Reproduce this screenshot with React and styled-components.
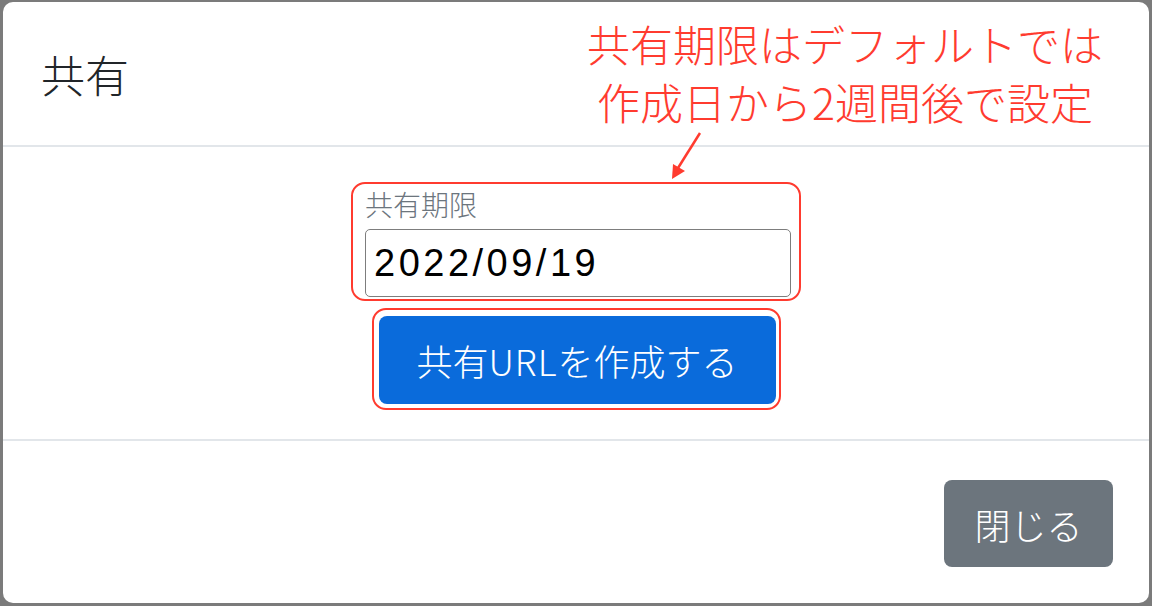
import React from 'react';
import styled, { createGlobalStyle } from 'styled-components';

const GlobalStyle = createGlobalStyle`
    * { box-sizing: border-box; }
    body {
        margin: 0;
        background: #7b7b7b;
        font-family: "Liberation Sans", "Noto Sans CJK JP", sans-serif;
        font-weight: 300;
    }
`

const Modal = styled.div`
    position: relative;
    display: flex;
    flex-direction: column;
    margin: 2px 3px 0 3px;
    height: 601px;
    background: #fff;
    border-radius: 10px;
    overflow: hidden;
`

const Header = styled.div`
    display: flex;
    align-items: center;
    height: 145px;
    padding-left: 38px;
    border-bottom: 2px solid #e2e6ea;
`

const Title = styled.h5`
    margin: 0;
    font-size: 44px;
    font-weight: 300;
    color: #212529;
`

const Note = styled.div`
    position: absolute;
    top: 18px;
    left: 562px;
    width: 560px;
    text-align: center;
    font-size: 43px;
    line-height: 54px;
    color: #ff3b2f;
`

// latin runs inside light CJK text, drawn with the CJK family so the weight matches
const Latin = styled.span`
    font-family: "Noto Sans CJK JP", sans-serif;
    font-weight: 300;
    letter-spacing: ${props => props.ls || 0}px;
`

const Arrow = styled.svg`
    position: absolute;
    top: 126px;
    left: 655px;
`

const Body = styled.div`
    display: flex;
    flex-direction: column;
    align-items: center;
    gap: 7px;
    padding: 35px 0 29px;
`

const Highlight = styled.div`
    border: 2px solid #ff3b2f;
    border-radius: 14px;
    width: ${props => props.w}px;
    padding: ${props => props.pad};
`

const Label = styled.label`
    display: block;
    font-size: 28px;
    line-height: 34px;
    margin-bottom: 5px;
    color: #6c757d;
`

const DateInput = styled.input`
    display: block;
    width: 100%;
    height: 68px;
    padding: 0 8px;
    border: 1px solid #7d7d7d;
    border-radius: 5px;
    font-family: "Liberation Sans", sans-serif;
    font-size: 38px;
    font-weight: 400;
    letter-spacing: 3.5px;
    color: #000;
    outline: none;
`

const Button = styled.button`
    display: flex;
    align-items: center;
    justify-content: center;
    width: ${props => props.w}px;
    height: ${props => props.h}px;
    border: none;
    border-radius: 8px;
    background: ${props => props.bg};
    color: #fff;
    font-family: "Liberation Sans", "Noto Sans CJK JP", sans-serif;
    font-size: 36px;
    font-weight: 300;
    cursor: pointer;
`

const Footer = styled.div`
    flex: 1;
    display: flex;
    justify-content: flex-end;
    align-items: flex-start;
    padding: 39px 36px 0 0;
    border-top: 2px solid #e2e6ea;
`

export default function App() {
    return (
        <>
            <GlobalStyle />
            <Modal>
                <Header>
                    <Title>共有</Title>
                </Header>
                <Note>
                    共有期限はデフォルトでは<br />
                    作成日から<Latin>2</Latin>週間後で設定
                </Note>
                <Arrow width="50" height="56" viewBox="0 0 50 56">
                    <line x1="42" y1="5" x2="20" y2="40" stroke="#ff3b2f" strokeWidth="2.5" />
                    <polygon points="14,51 15,36 27,43" fill="#ff3b2f" />
                </Arrow>
                <Body>
                    <Highlight w={450} pad="6px 8px 2px 12px">
                        <Label>共有期限</Label>
                        <DateInput type="text" value="2022/09/19" readOnly />
                    </Highlight>
                    <Highlight w={409} pad="6px 3px 4px 5px">
                        <Button w={397} h={88} bg="#0a6bdb">共有<Latin ls={1}>URL</Latin>を作成する</Button>
                    </Highlight>
                </Body>
                <Footer>
                    <Button w={169} h={87} bg="#6c757d">閉じる</Button>
                </Footer>
            </Modal>
        </>
    );
}
